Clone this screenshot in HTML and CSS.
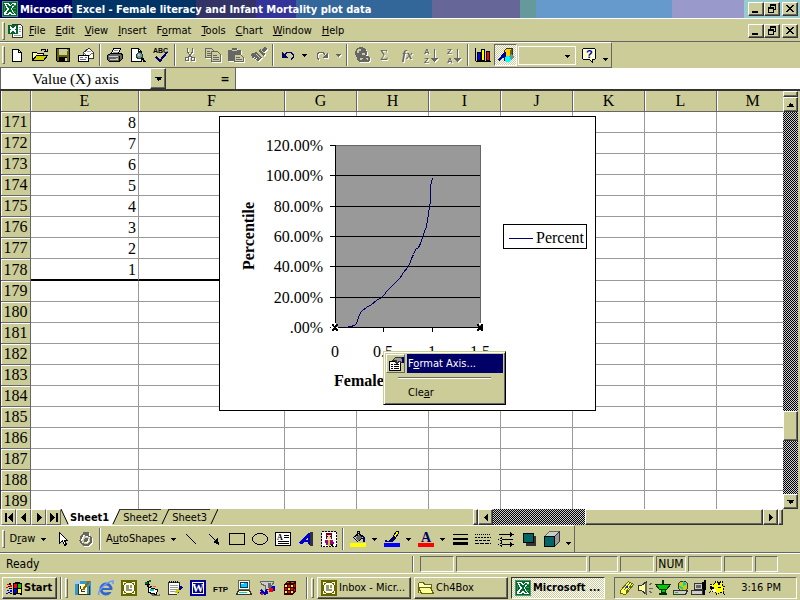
FILE: index.html
```html
<!DOCTYPE html>
<html lang="en">
<head>
<meta charset="utf-8">
<title>Microsoft Excel - Female literacy and Infant Mortality plot data</title>
<link rel="stylesheet" href="styles.css">
</head>
<body>
<svg class="defs" aria-hidden="true">
  <symbol id="excel" viewBox="0 0 16 16">
    <path fill="#063" d="M0 0h16v16H0z"/><path fill="#9c9" d="M0 0h16v1H0zM0 15h16v1H0zM0 0h1v16H0zM15 0h1v16h-1z" opacity=".5"/>
    <path fill="#fff" d="M2 2h5l1 2 2-2h4v3h-2l-2 3 4 6H9l-1-2-1 2H2v-3l3-3z"/>
    <path fill="#063" d="M4 3h2l2 3 2-3h2L9 8l3 5h-2L8 10l-2 3H4l3-5z"/><path fill="#393" d="M11 4h3v1h-3zM11 7h3v1h-3zM11 10h3v1h-3zM2 5h1v5H2z"/>
  </symbol>
  <symbol id="down" viewBox="0 0 5 3"><path d="M0 0h5v1H0zM1 1h3v1H1zM2 2h1v1H2z"/></symbol>
  <symbol id="min" viewBox="0 0 12 10"><path d="M2 7h6v2H2z"/></symbol>
  <symbol id="restore" viewBox="0 0 12 10"><path d="M4 0h6v6H8V5h1V2H5v1H4zM2 3h6v2H2zM2 5h1v4H2zM7 5h1v4H7zM2 8h6v1H2z"/></symbol>
  <symbol id="close" viewBox="0 0 12 10"><path d="M2 1h2v1H2zM8 1h2v1H8zM3 2h2v1H3zM7 2h2v1H7zM4 3h4v1H4zM5 4h2v1H5zM4 5h4v1H4zM3 6h2v1H3zM7 6h2v1H7zM2 7h2v1H2zM8 7h2v1H8z"/></symbol>
  <symbol id="clock" viewBox="0 0 16 16"><path fill="#660" d="M0 0h16v16H0z"/><path fill="none" stroke="#ffc" d="M2 2.500h3M11 2.500h3M2 13.500h3M11 13.500h3M2.500 2v3M13.500 2v3M2.500 11v3M13.500 11v3"/><circle cx="8" cy="8" r="4.500" fill="#996" stroke="#fff" stroke-width="2"/><path fill="none" stroke="#fff" d="M8 5v3.500h3"/></symbol>
</svg>

<header class="titlebar">
  <svg class="icon"><use href="#excel"/></svg>
  <h1>Microsoft Excel - Female literacy and Infant Mortality plot data</h1>
  <div class="winbtns">
    <button aria-label="Minimize"><svg><use href="#min"/></svg></button><button aria-label="Restore"><svg><use href="#restore"/></svg></button><button class="shut" aria-label="Close"><svg><use href="#close"/></svg></button>
  </div>
</header>

<nav class="menubar">
  <span class="grip"></span>
  <svg class="icon bookicon" viewBox="0 0 16 16"><path fill="#fff" stroke="#333" d="M4.500 1.500h8l2 2v11h-10z"/><path fill="#999" d="M11 4h2v1h-2zM11 6h2v1h-2zM11 8h2v1h-2zM6 12h7v1H6z"/><path fill="#063" d="M0 2h10v9H0z"/><path fill="none" stroke="#fff" stroke-width="2" d="M2 4l6 5M8 4L2 9"/></svg>
  <a href="#"><u>F</u>ile</a><a href="#"><u>E</u>dit</a><a href="#"><u>V</u>iew</a><a href="#"><u>I</u>nsert</a><a href="#">F<u>o</u>rmat</a><a href="#"><u>T</u>ools</a><a href="#"><u>C</u>hart</a><a href="#"><u>W</u>indow</a><a href="#"><u>H</u>elp</a>
  <div class="winbtns">
    <button aria-label="Minimize workbook"><svg><use href="#min"/></svg></button><button aria-label="Restore workbook"><svg><use href="#restore"/></svg></button><button class="shut" aria-label="Close workbook"><svg><use href="#close"/></svg></button>
  </div>
</nav>

<div class="band">
<div class="toolbar" role="toolbar" aria-label="Standard">
  <span class="grip"></span>
  <button class="tool" aria-label="New"><svg class="icon" viewBox="0 0 16 16"><path fill="#fff" stroke="#000" d="M3.500 2.500h6l3 3v9h-9z"/><path fill="none" stroke="#000" d="M9.500 2.500v3h3"/></svg></button>
  <button class="tool" aria-label="Open"><svg class="icon" viewBox="0 0 16 16"><path fill="#ff9" stroke="#000" d="M.5 13.500v-8h4l1 1h6v2"/><path fill="#cc0" stroke="#000" d="M.5 13.500l4-5h11l-4 5z"/><path fill="none" stroke="#000" d="M9 3.500l1-1h3l1 2M12 4.500h3v-3"/></svg></button>
  <button class="tool" aria-label="Save"><svg class="icon" viewBox="0 0 16 16"><path fill="#660" stroke="#000" d="M1.500 1.500h13v13h-12l-1-1z"/><path fill="#cc9" d="M4 2h8v6H4zM12 3h1v1h-1z"/><path d="M4 10h8v4H4z"/><path fill="#ccc" d="M10 11h2v3h-2z"/></svg></button>
  <button class="tool" aria-label="E-mail"><svg class="icon" viewBox="0 0 16 16"><path fill="#fff" stroke="#333" d="M5.500 5.500l5-4h1l4 4v6h-10z"/><path fill="#fff" stroke="#666" d="M5 6l5 3 5-3"/><path fill="#c99" d="M9 4h4v1H9z"/><path fill="#fff" stroke="#000" d="M.5 8.500h10v6H.5z"/><path stroke="#669" d="M2 10.500h3M2 12.500h6M7 10.500h2"/></svg></button>
  <span class="sep"></span>
  <button class="tool" aria-label="Print"><svg class="icon" viewBox="0 0 16 16"><path fill="#fff" stroke="#000" d="M4.500 6.500l2-5h7l-2 5z"/><path stroke="#999" d="M7 3.500h4M6 5.500h5"/><path fill="#666" stroke="#000" d="M.5 8.500l3-2h10l2 1v4l-3 3h-10l-2-2z"/><path fill="#ccc" d="M2 9h9v1H2zM3 12h8v1H3z"/><path fill="#cc0" d="M9 11h2v1H9z"/><path d="M12 9h1v5h-1z"/></svg></button>
  <button class="tool" aria-label="Print Preview"><svg class="icon" viewBox="0 0 16 16"><path fill="#fff" stroke="#000" d="M1.500 1.500h7l3 3v10h-10z"/><path fill="none" stroke="#000" d="M8.500 1.500v3h3"/><circle cx="9.500" cy="8.500" r="3" fill="#699" stroke="#333"/><path fill="#9cc" d="M8 7h2v2H8z"/><path stroke="#000" stroke-width="2" d="M12 11l3 4"/></svg></button>
  <button class="tool" aria-label="Spelling"><svg class="icon" viewBox="0 0 16 16"><text x="0" y="6" class="abc">ABC</text><path fill="none" stroke="#006" stroke-width="2" d="M3 10l4 4 7-9"/></svg></button>
  <span class="sep"></span>
  <button class="tool off" aria-label="Cut"><svg class="icon" viewBox="0 0 16 16"><path fill="none" stroke="#666" d="M5.500 1v4l4 5M10.500 1v4l-4 5"/><circle cx="5" cy="12" r="2" fill="none" stroke="#666"/><circle cx="11" cy="12" r="2" fill="none" stroke="#666"/></svg></button>
  <button class="tool off" aria-label="Copy"><svg class="icon" viewBox="0 0 16 16"><path fill="#cc9" stroke="#666" d="M.5 1.500h6l2 2v7h-8z"/><path fill="#cc9" stroke="#666" d="M6.500 4.500h6l3 3v7h-9z"/><path stroke="#666" d="M2 4.500h3M2 6.500h4M2 8.500h4M8 8.500h4M8 10.500h6M8 12.500h6"/></svg></button>
  <button class="tool off" aria-label="Paste"><svg class="icon" viewBox="0 0 16 16"><path fill="#666" d="M0 3h4V1h5v2h4v11H0z"/><path fill="#cc9" d="M4 3h5v1H4z"/><path fill="#cc9" stroke="#666" d="M6.500 7.500h6l3 3v4h-9z"/><path stroke="#666" d="M8 10.500h4M8 12.500h6"/></svg></button>
  <button class="tool off" aria-label="Format Painter"><svg class="icon" viewBox="0 0 16 16"><path fill="#666" d="M0 7l5-2 6 5-4 5-2-2 1-2-3 1 1-2-3 1zM7 4l2-2 5 5-2 2zM10 3l4-3 2 2-3 4z"/><path stroke="#cc9" d="M5 7l4 4M10 3l3 3"/></svg></button>
  <span class="sep"></span>
  <button class="tool" aria-label="Undo"><svg class="icon" viewBox="0 0 16 16"><path fill="none" stroke="#006" d="M5 7.500l2-2h4l2 2v3l-2 2"/><path fill="#006" d="M2 5v6h6z"/></svg></button>
  <button class="drop" aria-label="Undo list"><svg><use href="#down"/></svg></button>
  <button class="tool off" aria-label="Redo"><svg class="icon" viewBox="0 0 16 16"><path fill="none" stroke="#666" d="M11 7.500l-2-2H5l-2 2v3l2 2"/><path fill="#666" d="M14 5v6H8z"/></svg></button>
  <button class="drop off" aria-label="Redo list"><svg><use href="#down"/></svg></button>
  <span class="sep"></span>
  <button class="tool off" aria-label="Insert Hyperlink"><svg class="icon" viewBox="0 0 16 16"><circle cx="7" cy="6" r="6" fill="#666"/><path fill="#cc9" d="M4 2h3v2H5v2H3V4zM8 6h3v2H8z"/><path fill="#cc9" stroke="#666" stroke-width="1.500" d="M6 10h4v4H6l-2-2zM11 10h3l2 2-2 2h-3z"/><path stroke="#666" d="M8 12.500h5"/></svg></button>
  <button class="tool off" aria-label="AutoSum"><svg class="icon" viewBox="0 0 16 16"><text x="3" y="13" class="sum">Σ</text></svg></button>
  <button class="tool off" aria-label="Paste Function"><svg class="icon" viewBox="0 0 16 16"><text x="2" y="12" class="fx">fx</text></svg></button>
  <button class="tool off" aria-label="Sort Ascending"><svg class="icon" viewBox="0 0 16 16"><text x="1" y="7" class="sort">A</text><text x="1" y="16" class="sort">Z</text><path fill="#666" d="M11 2h1v9h3l-3.500 4L8 11h3z"/></svg></button>
  <button class="tool off" aria-label="Sort Descending"><svg class="icon" viewBox="0 0 16 16"><text x="1" y="7" class="sort">Z</text><text x="1" y="16" class="sort">A</text><path fill="#666" d="M11 2h1v9h3l-3.500 4L8 11h3z"/></svg></button>
  <span class="sep"></span>
  <button class="tool" aria-label="Chart Wizard"><svg class="icon" viewBox="0 0 16 16"><path fill="none" stroke="#000" d="M.5 1v12.500l1 1h14"/><path fill="#00f" stroke="#000" d="M2.500 5.500h3v8h-3z"/><path fill="#ff0" stroke="#000" d="M6.500 2.500h3v11h-3z"/><path fill="#f00" stroke="#000" d="M11.500 4.500h3v9h-3z"/></svg></button>
  <button class="tool pressed" aria-label="Drawing"><svg class="icon" viewBox="0 0 16 16"><path fill="#fc0" stroke="#333" d="M6.500 3.500l2-2h6v8l-2 2h-6z"/><path fill="#660" d="M12 3l2-1v7l-2 2z"/><path fill="#009" d="M0 13l6-8h2v9H6v-3H4l-2 3z"/><circle cx="10" cy="12" r="3" fill="#0ff"/><path fill="#699" d="M11 9l3-2 2 3-3 3z"/></svg></button>
  <select class="zoombox" aria-label="Zoom"><option></option></select>
  <button class="tool help" aria-label="Help"><svg class="icon" viewBox="0 0 16 16"><path fill="#ffc" stroke="#000" d="M2.500 1.500h11l1 1v9l-1 1h-2v3l-3-3h-6l-1-1v-9z"/><text x="5" y="11" class="q">?</text></svg></button>
  <button class="drop low" aria-label="More buttons"><svg><use href="#down"/></svg></button>
</div>
</div>

<div class="formula">
  <input class="namebox" aria-label="Name box" value="Value (X) axis">
  <button class="nbdrop" aria-label="Name list"><svg><use href="#down"/></svg></button>
  <button class="equals" aria-label="Edit formula">=</button>
  <input class="fx-input" aria-label="Formula">
</div>

<main class="sheet">
  <div class="cells">
  <table>
    <colgroup><col class="c-row"><col class="c-e"><col class="c-f"><col class="c-n"><col class="c-n"><col class="c-n"><col class="c-n"><col class="c-n"><col class="c-n"><col></colgroup>
    <thead><tr><th><th>E<th>F<th>G<th>H<th>I<th>J<th>K<th>L<th>M</thead>
    <tbody>
    <tr><th>171<td>8<td><td><td><td><td><td><td><td>
    <tr><th>172<td>7<td><td><td><td><td><td><td><td>
    <tr><th>173<td>6<td><td><td><td><td><td><td><td>
    <tr><th>174<td>5<td><td><td><td><td><td><td><td>
    <tr><th>175<td>4<td><td><td><td><td><td><td><td>
    <tr><th>176<td>3<td><td><td><td><td><td><td><td>
    <tr><th>177<td>2<td><td><td><td><td><td><td><td>
    <tr class="last"><th>178<td>1<td><td><td><td><td><td><td><td>
    <tr><th>179<td><td><td><td><td><td><td><td><td>
    <tr><th>180<td><td><td><td><td><td><td><td><td>
    <tr><th>181<td><td><td><td><td><td><td><td><td>
    <tr><th>182<td><td><td><td><td><td><td><td><td>
    <tr><th>183<td><td><td><td><td><td><td><td><td>
    <tr><th>184<td><td><td><td><td><td><td><td><td>
    <tr><th>185<td><td><td><td><td><td><td><td><td>
    <tr><th>186<td><td><td><td><td><td><td><td><td>
    <tr><th>187<td><td><td><td><td><td><td><td><td>
    <tr><th>188<td><td><td><td><td><td><td><td><td>
    <tr><th>189<td><td><td><td><td><td><td><td><td>
    </tbody>
  </table>
  <svg class="chart" viewBox="219 116 377 295" role="img" aria-label="Percentile chart">
    <path fill="#fff" stroke="#000" d="M219.500 116.500h376v294h-376z"/>
    <path fill="#999" d="M336 145h145v182H336z"/>
    <path fill="none" stroke="#666" d="M336 145.500h144.500V327"/>
    <path fill="none" stroke="#000" d="M330 145.500h5M330 175.500h150M330 206.500h150M330 236.500h150M330 266.500h150M330 297.500h150M330 327.500h150M335.500 145v187M383.500 327v5M432.500 327v5M480.500 327v5"/>
    <path fill="none" stroke="#006" d="M346.500 327.500l4-1 4-1 2-2 2-6 2-5 2-2 4-3 5-3 5-4 5-3 3-3 2-3 6-6 8-8 3-5 4-5 2-3 2-6 2-4 2-5 3-2 2-4 2-6 2-6 2-5 1-6 1-7 1-6 1-7v-15l2-7"/>
    <path d="M332 324h2v2h2v-2h2v2h-1v3h1v2h-2v-1h-2v1h-2v-2h1v-3h-1zM477 324h2v2h2v-2h2v7h-2v-1h-2v1h-2v-2h1v-3h-1z"/>
    <path fill="#fff" d="M334 323h2v2h-2zM334 330h2v2h-2zM331 327h3v1h-3zM336 327h2v1h-2zM479 323h2v2h-2zM479 330h2v2h-2z"/>
    <g text-anchor="end"><text x="323" y="151">120.00%</text><text x="323" y="181">100.00%</text><text x="323" y="212">80.00%</text><text x="323" y="242">60.00%</text><text x="323" y="272">40.00%</text><text x="323" y="303">20.00%</text><text x="323" y="333">.00%</text></g>
    <g text-anchor="middle"><text x="335" y="357">0</text><text x="383" y="357">0.5</text><text x="432" y="357">1</text><text x="480" y="357">1.5</text></g>
    <text class="b" x="334" y="386">Female</text>
    <text class="b" transform="translate(254 270) rotate(-90)">Percentile</text>
    <path fill="#fff" stroke="#000" d="M503.500 224.500h83v24h-83z"/><path stroke="#006" d="M509 238.500h24"/>
    <text x="536" y="243">Percent</text>
  </svg>
  <div class="popup" role="menu">
    <button role="menuitem" class="hot"><span class="popicon"><svg class="icon" viewBox="0 0 16 16"><path fill="#fff" stroke="#000" d="M1.500 5.500h11v9h-11z"/><path d="M3 8h2v1H3zM3 10h2v1H3zM3 12h2v1H3zM6 8h5v1H6zM6 10h5v1H6zM6 12h5v1H6z"/><path fill="#999" stroke="#333" d="M4.500 4.500l3-3h5l2 1v4l-4-1-1 2-2-1 1-2z"/><path fill="#006" d="M14 1h2v6h-2z"/></svg></span><span class="label">F<u>o</u>rmat Axis...</span></button>
    <hr>
    <button role="menuitem"><span class="popicon none"></span><span class="label">Cle<u>a</u>r</span></button>
  </div>
  </div>
  <div class="vscroll">
    <span class="split"></span>
    <button aria-label="Scroll up"><svg class="up"><use href="#down"/></svg></button>
    <div class="track"><span class="thumb"></span></div>
    <button aria-label="Scroll down"><svg><use href="#down"/></svg></button>
  </div>
</main>

<div class="tabs">
  <button class="nav" aria-label="First sheet"><svg viewBox="0 0 10 9"><path d="M1 0h2v9H1zM9 0v9L4 4.500z"/></svg></button><button class="nav" aria-label="Previous sheet"><svg viewBox="0 0 10 9"><path d="M7 0v9L2 4.500z"/></svg></button><button class="nav" aria-label="Next sheet"><svg viewBox="0 0 10 9"><path d="M3 0v9l5-4.500z"/></svg></button><button class="nav" aria-label="Last sheet"><svg viewBox="0 0 10 9"><path d="M1 0v9l5-4.500zM7 0h2v9H7z"/></svg></button>
  <svg class="slant" viewBox="0 0 8 16"><path fill="#fff" d="M0 0h8v15H7z"/><path fill="none" stroke="#000" d="M0 0l7 15"/></svg>
  <a class="tab on" href="#">Sheet1</a>
  <svg class="slant" viewBox="0 0 8 16"><path fill="#fff" d="M0 0h8L1 15H0z"/><path fill="none" stroke="#000" d="M8 0L1 15"/></svg>
  <a class="tab" href="#">Sheet2</a>
  <svg class="slant" viewBox="0 0 8 16"><path fill="none" stroke="#000" d="M8 0L1 15"/></svg>
  <a class="tab" href="#">Sheet3</a>
  <svg class="slant" viewBox="0 0 8 16"><path fill="none" stroke="#000" d="M8 0L1 15"/></svg>
  <div class="hscroll">
    <span class="split"></span>
    <button aria-label="Scroll left"><svg viewBox="0 0 6 7"><path d="M5 0v7L1 3.500z"/></svg></button>
    <div class="track"><span class="thumb"></span></div>
    <button aria-label="Scroll right"><svg viewBox="0 0 6 7"><path d="M1 0v7l4-3.500z"/></svg></button>
    <span class="split"></span>
  </div>
</div>

<div class="band lower">
<div class="toolbar drawing" role="toolbar" aria-label="Drawing">
  <span class="grip"></span>
  <button class="menu-tool draw"><span>D<u>r</u>aw</span><svg><use href="#down"/></svg></button>
  <button class="tool" aria-label="Select Objects"><svg class="icon" viewBox="0 0 16 16"><path fill="#fff" stroke="#000" d="M4.500 1.500v11l3-3 2 5 2-1-2-4h3z"/></svg></button>
  <button class="tool off" aria-label="Free Rotate"><svg class="icon" viewBox="0 0 16 16"><path fill="none" stroke="#666" stroke-width="2" d="M5 4a5.500 5.500 0 1 0 7 1"/><path fill="#666" d="M5 1h6v6l-2-2-4-1z"/><circle cx="8" cy="9" r="2" fill="#666"/></svg></button>
  <span class="sep"></span>
  <button class="menu-tool auto"><span>A<u>u</u>toShapes</span><svg><use href="#down"/></svg></button>
  <button class="tool" aria-label="Line"><svg class="icon" viewBox="0 0 16 16"><path stroke="#000" d="M3 3l10 10"/></svg></button>
  <button class="tool" aria-label="Arrow"><svg class="icon" viewBox="0 0 16 16"><path stroke="#000" d="M3 3l7 7"/><path d="M13 14l-1-7-5 4z"/></svg></button>
  <button class="tool" aria-label="Rectangle"><svg class="icon" viewBox="0 0 16 16"><path fill="none" stroke="#000" d="M.5 2.500h15v11H.5z"/></svg></button>
  <button class="tool" aria-label="Oval"><svg class="icon" viewBox="0 0 16 16"><ellipse cx="8" cy="8" rx="7.500" ry="5.500" fill="none" stroke="#000"/></svg></button>
  <button class="tool" aria-label="Text Box"><svg class="icon" viewBox="0 0 16 16"><path fill="#fff" stroke="#000" d="M.5 1.500h15v13H.5z"/><text x="2" y="9" class="tb">A</text><path stroke="#000" d="M9 4.500h5M9 6.500h5M3 10.500h11M3 12.500h11"/></svg></button>
  <button class="tool" aria-label="WordArt"><svg class="icon" viewBox="0 0 16 16"><path fill="#333" d="M12 1h3v14h-3z"/><path fill="#00c" d="M0 12L10 2h2v13l-2-2v-2H6l-2 2z"/><path fill="#cc9" d="M7 9l3-3v3z"/></svg></button>
  <button class="tool" aria-label="Clip Art"><svg class="icon" viewBox="0 0 16 16"><path fill="#fff" stroke="#000" stroke-dasharray="2 1" d="M.5.5h15v15H.5z"/><circle cx="8" cy="5" r="3.500" fill="#603"/><path fill="#fc9" d="M6 4h4v4H6z"/><path fill="#909" d="M4 9h8l1 4-3 1H5z"/><path fill="#cc0" d="M7 9h2v6H7z"/><path d="M6 5h1v1H6zM9 5h1v1H9zM10 13h2v2h-2z"/></svg></button>
  <span class="sep"></span>
  <button class="tool" aria-label="Fill Color"><svg class="icon" viewBox="0 0 16 16"><path fill="#ccc" stroke="#000" d="M3.500 6.500l5-4 5 4-6 4z"/><path fill="#666" d="M5 7l4-3 3 3-4 3z"/><path fill="none" stroke="#000" d="M7.500 5V.5h2V3"/><path fill="#006" d="M12 4l3 3v4h-2V7z"/><path fill="#ff0" d="M0 12h16v4H0z"/></svg></button>
  <button class="drop" aria-label="Fill colors"><svg><use href="#down"/></svg></button>
  <button class="tool" aria-label="Line Color"><svg class="icon" viewBox="0 0 16 16"><path fill="#ff0" stroke="#000" d="M9.500 4.500l3-4h2v2l-3 4z"/><path fill="#006" d="M1 9l4 1 4-5 3 2-4 4H1z"/><path fill="#00f" d="M0 12h16v4H0z"/></svg></button>
  <button class="drop" aria-label="Line colors"><svg><use href="#down"/></svg></button>
  <button class="tool" aria-label="Font Color"><svg class="icon" viewBox="0 0 16 16"><text x="3" y="11" class="fc">A</text><path fill="#f00" d="M0 12h16v4H0z"/></svg></button>
  <button class="drop" aria-label="Font colors"><svg><use href="#down"/></svg></button>
  <button class="tool" aria-label="Line Style"><svg class="icon" viewBox="0 0 16 16"><path d="M1 3h15v1H1zM1 7h15v2H1zM1 11h15v3H1z"/></svg></button>
  <button class="tool" aria-label="Dash Style"><svg class="icon" viewBox="0 0 16 16"><path stroke="#000" stroke-dasharray="1 1" d="M0 3.500h16"/><path stroke="#000" stroke-dasharray="2 1" d="M0 6.500h16"/><path stroke="#000" stroke-dasharray="3 1" d="M0 9.500h16"/><path stroke="#000" stroke-dasharray="4 1" d="M0 12.500h16"/></svg></button>
  <button class="tool" aria-label="Arrow Style"><svg class="icon" viewBox="0 0 16 16"><path d="M1 3h13v1H1zM12 1l4 2.500L12 6zM1 8h14v1H1zM4 6L0 8.500 4 11zM1 13h14v1H1zM12 11l4 2.500-4 2.500zM4 11l-4 2.500L4 16z"/></svg></button>
  <button class="tool" aria-label="Shadow"><svg class="icon" viewBox="0 0 16 16"><path fill="#333" d="M5 5h10v10H5z"/><path fill="#066" stroke="#000" d="M2.500 2.500h10v9h-10z"/></svg></button>
  <button class="tool" aria-label="3-D"><svg class="icon" viewBox="0 0 16 16"><path fill="#ccc" stroke="#666" d="M.5 5.500l5-5h10l-5 5z"/><path fill="#999" stroke="#333" d="M10.500 15.500v-10l5-5v10z"/><path fill="#066" stroke="#000" d="M.5 5.500h10v10H.5z"/></svg></button>
  <button class="drop low" aria-label="More drawing buttons"><svg><use href="#down"/></svg></button>
</div>
</div>

<div class="status">
  <span class="msg">Ready</span>
  <span class="pane w34"></span><span class="pane grow"></span><span class="pane w28"></span><span class="pane w34"></span><span class="pane w30">NUM</span><span class="pane w34"></span><span class="pane w28"></span><span class="pane w23"></span>
</div>

<footer class="taskbar">
  <button class="start"><svg class="icon" viewBox="0 0 16 16"><path d="M7 3l4-1 5 1v12l-4-1-5 1z"/><path fill="#f00" d="M8 4h3v4H8zM1 4h2v1H1zM4 5h2v2H4zM0 7h2v1H0z"/><path fill="#0c0" d="M12 4h3v4h-3z"/><path fill="#00f" d="M8 9h3v4H8zM1 10h2v1H1zM4 10h2v2H4zM0 13h2v1H0z"/><path fill="#ff0" d="M12 9h3v4h-3z"/><path d="M3 3h2v2H3zM2 6h2v1H2zM3 8h3v1H3zM2 12h2v1H2zM4 13h2v1H4z"/></svg>Start</button>
  <span class="bar"></span><span class="grip"></span>
  <div class="quick">
    <button aria-label="Show Desktop"><svg class="icon" viewBox="0 0 16 16"><path fill="#39c" d="M0 1h16v14H0z"/><path fill="#9cf" d="M0 1h5v3H0z"/><path fill="#ffc" d="M3 4h9v10H3z"/><path fill="none" stroke="#333" d="M3 14.500h11.500V6M3.500 4v10M5 6.500l2 5h3"/><path stroke="#960" stroke-width="2" d="M8 10l6-9"/></svg></button>
    <button aria-label="Internet Explorer"><svg class="icon smooth" viewBox="0 0 16 16"><circle cx="8" cy="9" r="5" fill="none" stroke="#36c" stroke-width="3"/><path fill="#cc9" d="M8 10h8v2H8z"/><path fill="#36c" d="M4 8h10v2H4z"/><path fill="none" stroke="#69f" stroke-width="1.500" d="M1 15C-1 11 8 2 15 1v3"/></svg></button>
    <button aria-label="Outlook"><svg class="icon"><use href="#clock"/></svg></button>
    <button aria-label="Desktop mail"><svg class="icon" viewBox="0 0 16 16"><path fill="#666" d="M7 14l8 1 1-2v3H8z"/><path fill="#fff" stroke="#000" d="M4.500 7.500l9 2-1 5-8-2z"/><path d="M1 4h5v1H1zM3 1h2v6H3zM6 6h2v1H6z"/><path fill="#063" d="M1 2h3v2H1zM5 0h2v2H5z"/><path fill="#0cc" d="M6 9h4v2H6z"/><path fill="#f60" d="M9 6h3v1H9z"/></svg></button>
    <button aria-label="Notepad"><svg class="icon" viewBox="0 0 16 16"><path fill="#fff" stroke="#333" d="M1.500 2.500h11v8l-3 4h-8z"/><path stroke="#000" stroke-dasharray="1 1" stroke-width="2" d="M2 2h10"/><path stroke="#999" d="M3 5.500h8M3 7.500h8M3 9.500h7M3 11.500h6"/><path stroke="#cc0" stroke-width="3" d="M9 13l5-6"/><path fill="#009" d="M12 5l4 2-3 4-1-2z"/></svg></button>
    <button aria-label="Word"><svg class="icon" viewBox="0 0 16 16"><path fill="#009" d="M0 0h16v16H0z"/><path fill="none" stroke="#fff" d="M2.500 2.500h11v11h-11z"/><text x="2" y="12" class="wd">W</text></svg></button>
    <button aria-label="FTP"><svg class="icon" viewBox="0 0 16 16"><text x="0" y="12" class="ftp">FTP</text></svg></button>
    <button aria-label="My Computer"><svg class="icon" viewBox="0 0 16 16"><path fill="#ffc" stroke="#666" d="M2.500.5h11v9h-11z"/><path fill="#0cf" stroke="#036" d="M4.500 2.500h7v5h-7z"/><path fill="#fff" d="M5 3h3v1H5z"/><path fill="#ffc" stroke="#333" d="M.5 14.500l2-4h11l2 4z"/><path fill="#0cf" d="M3 12h8v1H3z"/></svg></button>
    <button aria-label="Network tool"><svg class="icon" viewBox="0 0 16 16"><path fill="#ccc" stroke="#666" d="M1.500 1.500h13l-1 4-2 1v3h-5v-4l-4-1z"/><path fill="#666" d="M9 3h3v5H9z"/><path fill="none" stroke="#00c" stroke-width="2" d="M8 9l-2 4H1M2 10l4 4 3-2M12 8l3-1v4"/><path fill="#f00" d="M10 8h4v4h-4zM2 13h2v2H2z"/></svg></button>
    <button aria-label="Color cube"><svg class="icon" viewBox="0 0 16 16"><path fill="#300" d="M2 4l3-3h9v10l-3 4H2z"/><path fill="#960" d="M5 2h2v1H5zM9 2h3v1H9z"/><path fill="#ff0" d="M3 5h2v2H3zM9 5h2v2H9zM6 8h2v2H6zM3 11h2v2H3zM9 11h2v2H9z"/><path fill="#f00" d="M6 5h2v2H6zM3 8h2v2H3zM9 8h2v2H9zM6 11h2v2H6zM12 4h1v3h-1zM12 9h1v2h-1z"/></svg></button>
  </div>
  <span class="bar"></span><span class="grip"></span>
  <button class="task"><svg class="icon"><use href="#clock"/></svg>Inbox - Micr...</button>
  <button class="task"><svg class="icon" viewBox="0 0 16 16"><path fill="#ffc" stroke="#660" d="M.5 12.500v-9l1-1h4l1 2h7v3"/><path fill="#ff9" stroke="#660" d="M3.500 13.500l-3-6h12l3 6z"/></svg>Ch4Box</button>
  <button class="task active"><svg class="icon"><use href="#excel"/></svg>Microsoft ...</button>
  <div class="tray">
    <svg class="icon" viewBox="0 0 16 16"><path fill="#ff6" stroke="#660" d="M1.500 10.500l8-9 5 3-8 10-5-1z"/><path stroke="#663" d="M5 10l6-7M7 12l6-8"/><path fill="#03c" d="M7 6h2v2H7z"/></svg>
    <svg class="icon" viewBox="0 0 16 16"><path fill="#ff9" stroke="#333" d="M1.500 5.500h3l5-4v13l-5-4h-3z"/><path fill="#666" d="M8 3h2v11H8z"/><path stroke="#666" d="M12 5l3-2M12 8.500h4M12 11l3 2"/></svg>
    <svg class="icon" viewBox="0 0 16 16"><path fill="#0c0" stroke="#030" d="M.5 4.500h15l-4 5h-7zM6 9.500h4v3H6z"/><path fill="#030" d="M7 0h2v5H7zM4 13h8v2H4z"/></svg>
    <svg class="icon" viewBox="0 0 16 16"><circle cx="10" cy="6" r="5" fill="#cc0" stroke="#333"/><path fill="#0cc" d="M10 1l4 3-4 2zM6 6l4 1v4z"/><path fill="#ccc" stroke="#333" d="M.5 10.500h14l-2 4H.5z"/><path fill="#0c0" d="M2 12h3v1H2z"/></svg>
    <svg class="icon" viewBox="0 0 16 16"><path fill="#ccc" stroke="#333" d="M3.500 3.500h8v6h-8zM.5 10.500h11v4H.5z"/><path fill="#666" d="M5 5h5v3H5z"/><path d="M11 2h2V0h2v10h-1v5h-2z"/></svg>
    <svg class="icon" viewBox="0 0 16 16"><path fill="#ff0" stroke="#000" stroke-dasharray="2 1" d="M1 5l4-1 2-3 3 2 3-2v4l3 2-2 2 1 5-4-2-3 3-2-4-5 1 2-4z"/><path d="M1 7h4v2H1zM9 3h2v2H9zM9 7h3v1H9z"/><path fill="#fff" d="M4 9h3v3H4z"/></svg>
    <time>3:16 PM</time>
  </div>
</footer>
</body>
</html>
```
FILE: styles.css
```css
* { box-sizing: border-box; }
html, body { height: 100%; }
body {
  margin: 0;
  display: flex;
  flex-direction: column;
  overflow: hidden;
  background: #cccc99;
  color: #000;
  font: 11px/14px "DejaVu Sans Condensed", "DejaVu Sans", Tahoma, sans-serif;
}
button, input, select { font: inherit; color: inherit; margin: 0; padding: 0; border: 0; border-radius: 0; background: none; }
a { color: inherit; text-decoration: none; }
svg { shape-rendering: crispEdges; flex: none; display: block; }
.defs { position: absolute; width: 0; height: 0; }
.icon { width: 16px; height: 16px; }
.smooth { shape-rendering: auto; }

.titlebar {
  flex: none;
  height: 18px;
  display: flex;
  align-items: center;
  gap: 2px;
  padding: 0 2px;
  color: #fff;
  background: linear-gradient(90deg, #000066 9%, #003366 9% 24.5%, #333366 24.5% 32%, #333399 32% 37%, #336699 37% 54%, #666699 54% 65%, #669999 65% 67%, #6699cc 67% 84%, #9999cc 84% 93%, #99cccc 93%);
}
.titlebar h1 { margin: 0; padding-top: 1px; font-size: 11px; font-weight: bold; white-space: nowrap; }
.winbtns { margin-left: auto; display: flex; color: #000; }
.winbtns button { width: 16px; height: 14px; display: grid; place-items: center; background: #cccc99; border: 1px solid; border-color: #fff #333 #333 #fff; box-shadow: inset -1px -1px #666; }
.winbtns svg { width: 12px; height: 10px; }
.winbtns .shut { margin-left: 2px; }

.menubar { flex: none; height: 24px; display: flex; align-items: center; padding: 1px 2px 0; border-top: 1px solid #fff; border-bottom: 1px solid #666; }
.menubar a { padding: 1px 5px 0; }
.bookicon { margin-left: 3px; }
.grip { flex: none; width: 3px; height: 18px; border: 1px solid; border-color: #fff #666 #666 #fff; }

.band { flex: none; display: flex; }
.toolbar { height: 26px; display: flex; align-items: center; padding-left: 2px; border: solid; border-width: 1px 1px 1px 0; border-color: #fff #666 #666; }
.tool { width: 23px; height: 22px; display: grid; place-items: center; }
.drop { width: 11px; height: 22px; display: grid; place-items: center; }
.drop svg, .menu-tool svg { width: 5px; height: 3px; }
.drop.low { padding-top: 8px; }
.off svg { fill: #666; filter: drop-shadow(1px 1px 0 #fff); }
.sep { width: 6px; height: 22px; background: linear-gradient(90deg, transparent 2px, #666 2px 3px, #fff 3px 4px, transparent 4px); }
.pressed { background: repeating-conic-gradient(#fff 0 25%, #cccc99 0 50%) 0 0 / 2px 2px; border: 1px solid; border-color: #666 #fff #fff #666; }
.zoombox { appearance: none; width: 58px; height: 19px; margin: 0 1px; border: 1px solid #fff; background: linear-gradient(#000, #000) right 5px top 8px / 5px 1px no-repeat, linear-gradient(#000, #000) right 6px top 9px / 3px 1px no-repeat, linear-gradient(#000, #000) right 7px top 10px / 1px 1px no-repeat; }
.menu-tool { display: flex; align-items: center; justify-content: center; gap: 6px; }
.draw { width: 46px; }
.auto { width: 76px; }
.abc { font: bold 7px "Liberation Sans", sans-serif; }
.sum { font: 14px "Liberation Serif", serif; }
.fx { font: italic bold 13px "Liberation Serif", serif; }
.sort { font: bold 8px "Liberation Sans", sans-serif; }
.q { font: bold 11px "Liberation Sans", sans-serif; fill: #009; }
.tb { font: bold 8px "Liberation Serif", serif; }
.fc { font: bold 14px "Liberation Serif", serif; fill: #006; }
.wd { font: bold 12px "Liberation Serif", serif; fill: #fff; }
.ftp { font: bold 8px "Liberation Sans", sans-serif; }

.formula { flex: none; height: 21px; display: flex; background: #fff; border-left: 1px solid #666; }
.namebox { width: 149px; text-align: center; font: 15px/20px "Liberation Serif", serif; background: #fff; }
.nbdrop { width: 16px; display: grid; place-items: center; background: #cccc99; border: 1px solid; border-color: #fff #333 #333 #fff; box-shadow: inset -1px -1px #666; }
.nbdrop svg, .vscroll svg { width: 7px; height: 4px; }
.equals { width: 70px; padding-left: 49px; background: #cccc99; border-right: 1px solid #666; font-weight: bold; font-size: 12px; }
.fx-input { flex: 1; min-width: 0; background: #fff; }

.sheet { flex: 1; min-height: 0; display: flex; border-top: 2px solid #333; border-left: 1px solid #333; padding-right: 2px; }
.cells { flex: 1; min-width: 0; position: relative; overflow: hidden; background: #fff; }
table { width: 100%; min-width: 788px; table-layout: fixed; border-collapse: separate; border-spacing: 0; font: 16px/18px "Liberation Serif", serif; }
.c-row { width: 30px; }
.c-e { width: 108px; }
.c-f { width: 146px; }
.c-n { width: 72px; }
th, td { height: 21px; padding: 0; overflow: hidden; border: 0 solid #999; border-width: 0 1px 1px 0; }
th { font-weight: normal; text-align: center; background: #cccc99; border-color: #666; box-shadow: inset 1px 1px #fff; }
thead th { box-shadow: inset 1px 0 #fff; }
td { text-align: right; padding: 2px 2px 0 0; }
.last th, .last td { height: 22px; }
.last td:nth-child(-n+3) { border-bottom: 2px solid #000; }

.chart { position: absolute; left: 218px; top: 25px; width: 377px; height: 295px; font: 16px "Liberation Serif", serif; }
.chart .b { font-weight: bold; }
.popup { position: absolute; left: 382px; top: 260px; width: 123px; padding: 2px; background: #cccc99; border: 1px solid; border-color: #cccc99 #000 #000 #cccc99; box-shadow: inset 1px 1px #fff, inset -1px -1px #666; }
.popup button { width: 100%; height: 19px; display: flex; gap: 2px; text-align: left; }
.popup .label { flex: 1; padding: 3px 1px 2px; }
.popup .hot .label { background: #000066; color: #fff; }
.popicon { width: 19px; height: 19px; display: grid; place-items: center; border: 1px solid; border-color: #fff #666 #666 #fff; }
.popicon.none { border-color: transparent; }
.popup hr { margin: 4px 12px 4px; height: 2px; border: 0; background: linear-gradient(#666 50%, #fff 50%); }

.vscroll { width: 15px; display: flex; flex-direction: column; }
.vscroll button, .thumb, .split { flex: none; background: #cccc99; border: 1px solid; border-color: #fff #333 #333 #fff; box-shadow: inset -1px -1px #666; }
.vscroll button { height: 15px; display: grid; place-items: center; }
.vscroll .split { height: 6px; }
.up { transform: rotate(180deg); }
.track { flex: 1; display: flex; background: repeating-conic-gradient(#000 0 25%, #ccc 0 50%) 0 0 / 2px 2px; }
.vscroll .track { flex-direction: column; }
.vscroll .thumb { height: 30px; margin-top: auto; margin-bottom: 53px; }

.tabs { flex: none; height: 16px; display: flex; }
.nav { width: 15px; display: grid; place-items: center; border: 1px solid; border-color: #fff #666 #666 #fff; }
.nav:first-child { margin-left: 1px; }
.nav svg { width: 10px; height: 9px; }
.slant { width: 8px; height: 16px; shape-rendering: auto; }
.tab { padding: 1px 3px 0; border-top: 1px solid #333; }
.tab.on { padding-top: 2px; padding-left: 1px; border-top: 0; background: #fff; font-weight: bold; }
.hscroll { margin-left: auto; width: 310px; margin-right: 17px; display: flex; }
.hscroll button { width: 15px; display: grid; place-items: center; border: 1px solid; border-color: #fff #333 #333 #fff; box-shadow: inset -1px -1px #666; }
.hscroll button svg { width: 6px; height: 7px; }
.hscroll .split { width: 5px; }
.hscroll .thumb { width: 178px; margin-left: auto; }

.lower { border-bottom: 1px solid #666; }
.drawing { height: 27px; border-bottom: 0; }

.status { flex: none; height: 20px; display: flex; gap: 2px; padding: 2px 22px 1px 6px; border-top: 1px solid #fff; font-size: 12px; }
.msg { width: 408px; margin-right: 4px; padding-top: 1px; border-right: 1px solid #fff; box-shadow: inset -1px 0 #666; }
.pane { border: 1px solid; border-color: #666 #fff #fff #666; text-align: center; }
.grow { flex: 1; }
.w34 { width: 34px; }
.w30 { width: 30px; }
.w28 { width: 29px; }
.w23 { width: 23px; }

.taskbar { flex: none; height: 27px; display: flex; align-items: center; gap: 3px; padding: 1px 3px 0 2px; border-top: 1px solid #fff; }
.taskbar .grip { height: 20px; }
.bar { width: 2px; height: 22px; background: linear-gradient(90deg, #666 50%, #fff 50%); }
.start, .task { height: 22px; display: flex; align-items: center; gap: 2px; padding: 0 3px; white-space: nowrap; border: 1px solid; border-color: #fff #333 #333 #fff; box-shadow: inset -1px -1px #666; }
.start { width: 55px; font-weight: bold; }
.quick { width: 232px; display: flex; }
.quick button { width: 23px; display: grid; place-items: center; }
.task { width: 94px; }
.task.active { font-weight: bold; border-color: #333 #fff #fff #333; box-shadow: none; background: repeating-conic-gradient(#fff 0 25%, #cccc99 0 50%) 0 0 / 2px 2px; }
.tray { margin-left: auto; width: 183px; height: 22px; display: flex; align-items: center; gap: 2px; padding: 0 15px 0 4px; border: 1px solid; border-color: #666 #fff #fff #666; }
.tray time { margin-left: auto; white-space: nowrap; }
```
